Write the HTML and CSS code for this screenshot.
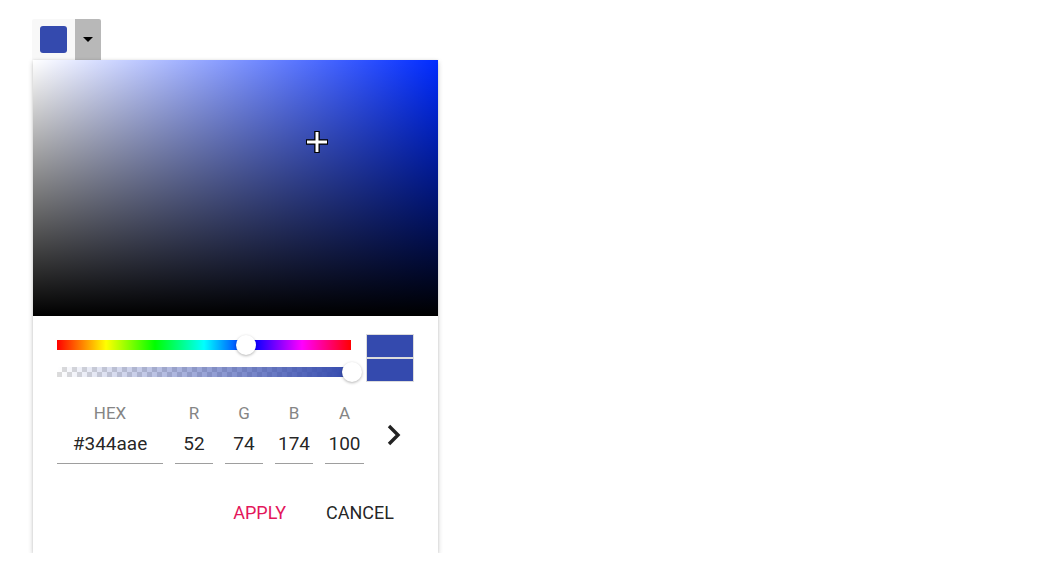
FILE: index.html
```html
<!DOCTYPE html>
<html>
<head>
<meta charset="utf-8">
<link rel="stylesheet" href="styles.css">
</head>
<body>
<div class="page">
  <div class="split-btn">
    <div class="split-main"><span class="tile"></span></div>
    <div class="split-drop"><span class="caret"></span></div>
  </div>
  <div class="popup">
    <div class="hsv">
      <svg class="cross" width="24" height="24" viewBox="0 0 24 24">
        <path d="M1 12H23M12 1V23" stroke="#000" stroke-width="5.5" fill="none"/>
        <path d="M2 12H22M12 2V22" stroke="#fff" stroke-width="3" fill="none"/>
      </svg>
    </div>
    <div class="controls">
      <div class="sliders">
        <div class="track hue"><span class="handle handle-hue"></span></div>
        <div class="track alpha"><span class="alpha-fill"></span><span class="handle handle-alpha"></span></div>
      </div>
      <div class="preview">
        <span class="swatch"></span>
        <span class="swatch"></span>
      </div>
    </div>
    <div class="inputs">
      <div class="field field-hex"><span class="label">HEX</span><span class="value">#344aae</span></div>
      <div class="field"><span class="label">R</span><span class="value">52</span></div>
      <div class="field"><span class="label">G</span><span class="value">74</span></div>
      <div class="field"><span class="label">B</span><span class="value">174</span></div>
      <div class="field field-a"><span class="label">A</span><span class="value">100</span></div>
      <svg class="chev" width="16" height="24" viewBox="0 0 16 24">
        <polyline points="3,3 12,12 3,21" fill="none" stroke="#222" stroke-width="3.4"/>
      </svg>
    </div>
    <div class="actions">
      <span class="btn btn-apply">APPLY</span>
      <span class="btn btn-cancel">CANCEL</span>
    </div>
  </div>
</div>
</body>
</html>
```

FILE: styles.css
```css
html, body {
  margin: 0;
  padding: 0;
  background: #fff;
  font-family: Roboto, "Noto Sans", Arial, sans-serif;
}
.page {
  padding: 19px 0 0 32px;
  display: flex;
  flex-direction: column;
  align-items: flex-start;
}
.split-btn {
  display: flex;
  height: 41px;
}
.split-main {
  width: 43px;
  background: #f8f8f8;
  border-radius: 2px 0 0 0;
  display: flex;
  justify-content: center;
  padding-top: 7px;
  box-sizing: border-box;
}
.tile {
  width: 27px;
  height: 27px;
  background: #344aae;
  border-radius: 3px;
}
.split-drop {
  width: 26px;
  background: #b8b8b8;
  border-radius: 0 2px 0 0;
  display: flex;
  justify-content: center;
  padding-top: 18px;
  box-sizing: border-box;
}
.caret {
  width: 0;
  height: 0;
  border-left: 5px solid transparent;
  border-right: 5px solid transparent;
  border-top: 5px solid #000;
}
.popup {
  margin-left: 1px;
  width: 405px;
  background: #fff;
  box-shadow: 0 2px 5px rgba(0,0,0,0.22), 0 0 2px rgba(0,0,0,0.08);
  display: flex;
  flex-direction: column;
  padding-bottom: 22px;
}
.hsv {
  position: relative;
  height: 256px;
  background:
    linear-gradient(to top, #000, rgba(0,0,0,0)),
    linear-gradient(to right, #fff, #002bff);
}
.cross {
  position: absolute;
  left: 272px;
  top: 70px;
}
.controls {
  display: flex;
  padding: 18px 24px 0 24px;
  gap: 15px;
}
.sliders {
  width: 294px;
  display: flex;
  flex-direction: column;
  padding-top: 6px;
  gap: 17px;
}
.track {
  position: relative;
  height: 10px;
}
.hue {
  background: linear-gradient(to right, #f00 0%, #ff0 16.66%, #0f0 33.33%, #0ff 50%, #00f 66.66%, #f0f 83.33%, #f00 100%);
}
.alpha {
  background-color: #fff;
  background-image:
    linear-gradient(45deg, #dcdcdc 25%, transparent 25%, transparent 75%, #dcdcdc 75%),
    linear-gradient(45deg, #dcdcdc 25%, transparent 25%, transparent 75%, #dcdcdc 75%);
  background-size: 10px 10px;
  background-position: 0 0, 5px 5px;
}
.alpha-fill {
  position: absolute;
  inset: 0;
  background: linear-gradient(to right, rgba(52,74,174,0), #344aae);
}
.handle {
  position: absolute;
  top: -5px;
  width: 20px;
  height: 20px;
  margin-left: -10px;
  border-radius: 50%;
  background: #fff;
  box-shadow: 0 1px 3px rgba(0,0,0,0.3);
}
.handle-hue { left: 64.3%; }
.handle-alpha { left: calc(100% + 1px); }
.preview {
  width: 48px;
  height: 48px;
  box-sizing: border-box;
  border: 1px solid #dcdcdc;
  background: #dcdcdc;
  display: flex;
  flex-direction: column;
  gap: 2px;
}
.swatch {
  flex: 1;
  background: #344aae;
}
.inputs {
  display: flex;
  padding: 20px 0 0 24px;
  gap: 12px;
}
.field {
  width: 38px;
  display: flex;
  flex-direction: column;
  align-items: center;
}
.field-hex { width: 106px; }
.field-a { width: 39px; }
.label {
  height: 22px;
  line-height: 22px;
  font-size: 17px;
  color: #858585;
}
.value {
  align-self: stretch;
  text-align: center;
  padding: 6px 0 5px;
  line-height: 28px;
  font-size: 19px;
  color: rgba(0,0,0,0.87);
  border-bottom: 1px solid #9e9e9e;
}
.chev {
  margin: 21px 0 0 10px;
}
.actions {
  display: flex;
  justify-content: flex-end;
  gap: 16px;
  padding: 31px 32px 0 0;
}
.btn {
  height: 36px;
  line-height: 36px;
  padding: 0 12px;
  font-size: 18px;
  font-weight: 400;
}
.btn-apply { color: #e3165b; }
.btn-cancel { color: rgba(0,0,0,0.87); }
```
